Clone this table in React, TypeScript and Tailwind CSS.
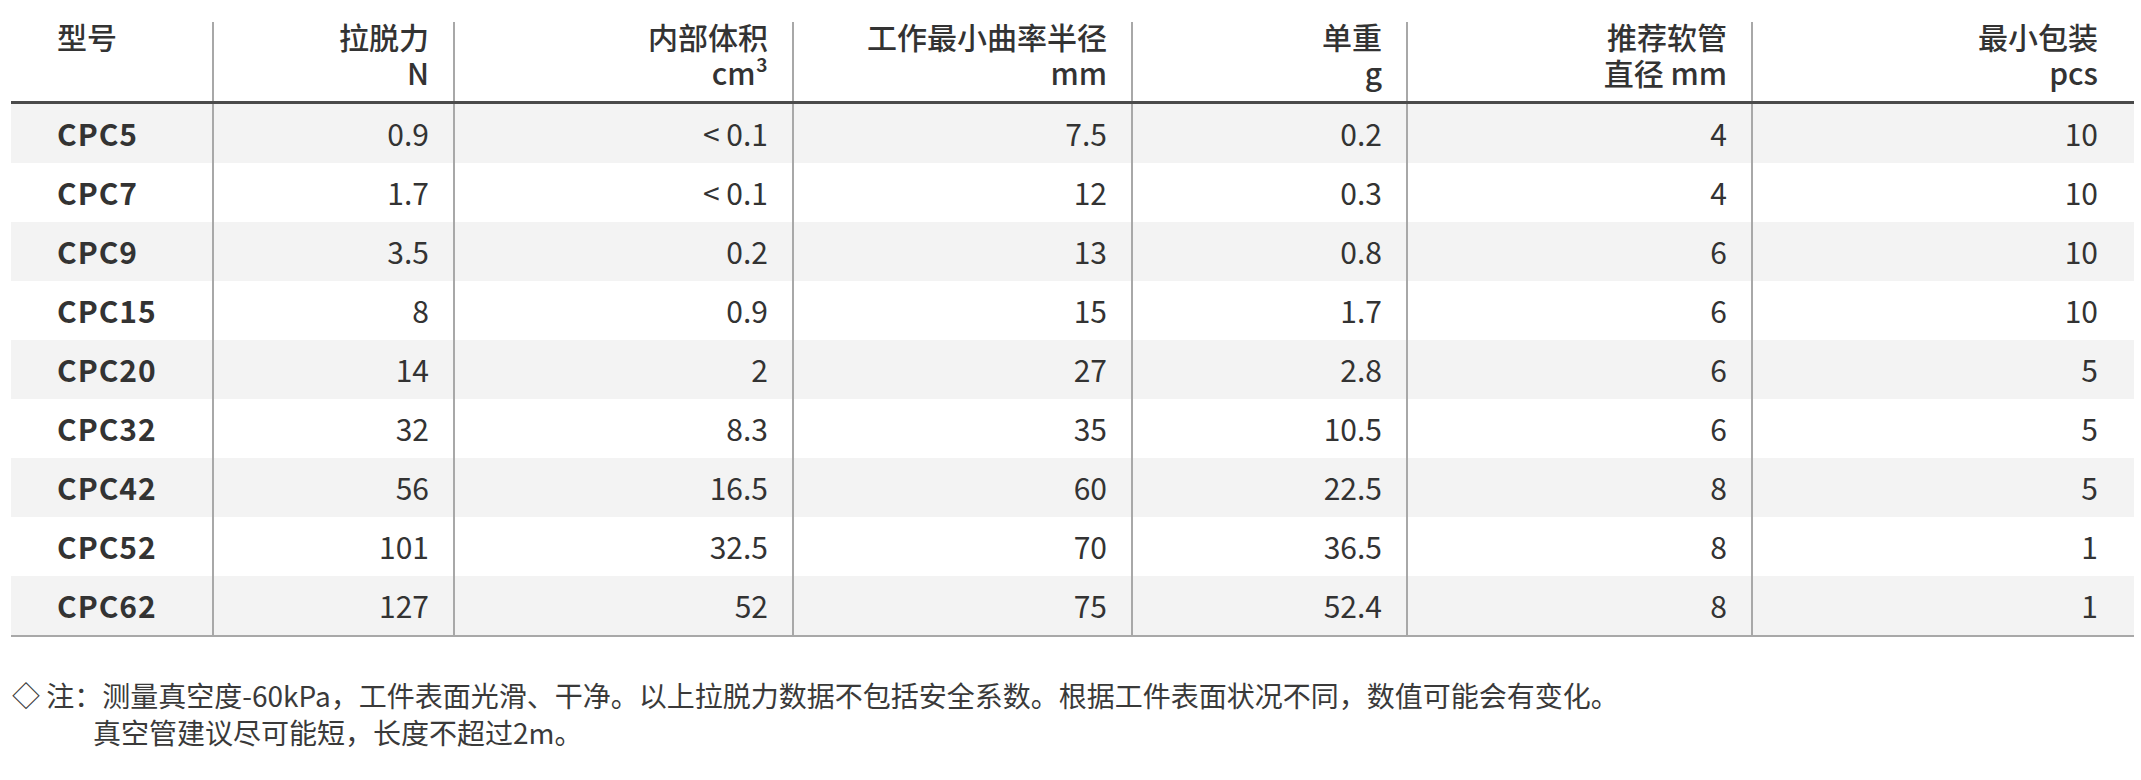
import React from "react";

const rows: string[][] = [
  ["CPC5", "0.9", "< 0.1", "7.5", "0.2", "4", "10"],
  ["CPC7", "1.7", "< 0.1", "12", "0.3", "4", "10"],
  ["CPC9", "3.5", "0.2", "13", "0.8", "6", "10"],
  ["CPC15", "8", "0.9", "15", "1.7", "6", "10"],
  ["CPC20", "14", "2", "27", "2.8", "6", "5"],
  ["CPC32", "32", "8.3", "35", "10.5", "6", "5"],
  ["CPC42", "56", "16.5", "60", "22.5", "8", "5"],
  ["CPC52", "101", "32.5", "70", "36.5", "8", "1"],
  ["CPC62", "127", "52", "75", "52.4", "8", "1"],
];

const headers: [string, string][] = [
  ["型号", ""],
  ["拉脱力", "N"],
  ["内部体积", "cm³"],
  ["工作最小曲率半径", "mm"],
  ["单重", "g"],
  ["推荐软管", "直径 mm"],
  ["最小包装", "pcs"],
];

const grid = "grid grid-cols-[201px_241px_339px_339px_275px_345px_383px]";
const font = { fontFamily: '"Noto Sans CJK SC", "Noto Sans", sans-serif' };

export default function App() {
  return (
    <div className="w-[2141px] h-[780px] bg-white text-[#333333] pl-[11px] pt-[22px]" style={font}>
      <div className="w-[2123px]">
        <div className={`${grid} h-[82px] border-b-[3px] border-[#4a4a4a]`}>
          {headers.map(([a, b], i) => (
            <div
              key={i}
              className={`${i > 0 ? "border-l-2 border-[#a8a8a8] text-right" : "pl-[46px]"} ${
                i === 6 ? "pr-[36px]" : "pr-[24px]"
              } text-[30px] font-medium`}
            >
              <div className="leading-[28px]">{a}</div>
              <div className="leading-[44px]">{b}</div>
            </div>
          ))}
        </div>
        <div className="border-b-2 border-[#a8a8a8]">
          {rows.map((r, ri) => (
            <div key={ri} className={`${grid} h-[59px] ${ri % 2 === 0 ? "bg-[#f3f3f3]" : "bg-white"}`}>
              {r.map((c, ci) => (
                <div
                  key={ci}
                  className={`flex items-center text-[30px] ${
                    ci === 0
                      ? "pl-[46px] font-bold tracking-[1px]"
                      : "justify-end border-l-2 border-[#a8a8a8]"
                  } ${ci === 6 ? "pr-[36px]" : "pr-[24px]"}`}
                >
                  {c}
                </div>
              ))}
            </div>
          ))}
        </div>
      </div>
      <div className="mt-[40px] text-[28px] leading-[37px] text-[#3a3a3a]">
        <div className="pl-[1px]">◇ 注：测量真空度-60kPa，工件表面光滑、干净。以上拉脱力数据不包括安全系数。根据工件表面状况不同，数值可能会有变化。</div>
        <div className="pl-[82px]">真空管建议尽可能短，长度不超过2m。</div>
      </div>
    </div>
  );
}
